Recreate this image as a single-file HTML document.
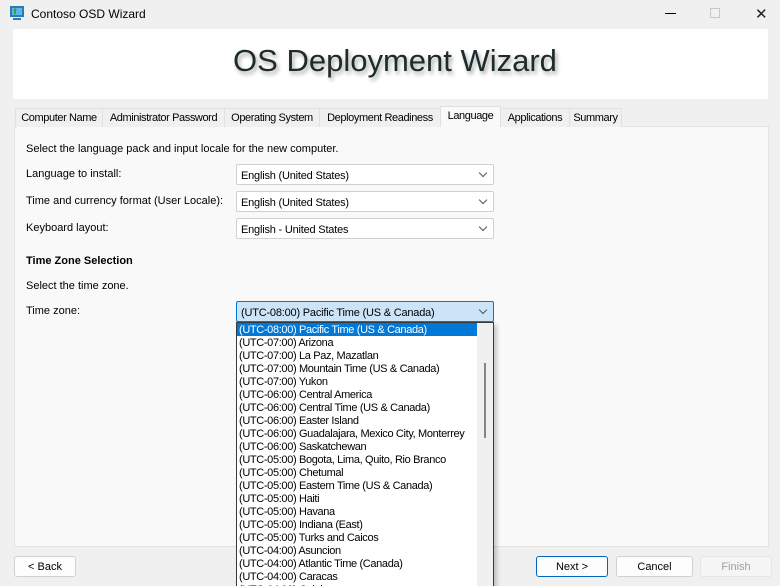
<!DOCTYPE html>
<html><head><style>
*{margin:0;padding:0;box-sizing:border-box}
html{width:780px;height:586px;overflow:hidden}
body{width:780px;height:586px;background:#f0f0f0;font-family:"Liberation Sans",sans-serif;font-size:11px;color:#000;position:relative;overflow:hidden}
.a{position:absolute;white-space:nowrap}
.hdr{left:13px;top:29px;width:755px;height:70px;background:#fff}
.title{left:0;width:790px;top:43px;text-align:center;font-size:31px;color:#1e2b2b;text-shadow:2px 3px 4px rgba(0,0,0,.35)}
.panel{left:14px;top:126px;width:755px;height:421px;background:#f9f9f9;border:1px solid #e3e3e3}
.tab{top:108px;height:19px;border:1px solid #e0e0e0;border-bottom:none;background:#f0f0f0;padding-top:3px;text-align:center;font-size:11px;letter-spacing:-0.4px;overflow:hidden}
.tab.sel{top:106px;height:21px;background:#f9f9f9;padding-top:3px}
.cb{left:236px;width:258px;height:21px;background:#fff;border:1px solid #d0d0d0;border-radius:2px;padding:5px 0 0 4px;letter-spacing:-0.2px}
.cb:after{content:"";position:absolute;right:7px;top:5px;width:5px;height:5px;border-right:1px solid #555;border-bottom:1px solid #555;transform:rotate(45deg)}
.btn{top:556px;height:21px;border:1px solid #d0d0d0;background:#fdfdfd;border-radius:3px;text-align:center;padding-top:4px;font-size:11px}
.list{left:236px;top:322px;width:258px;height:270px;background:#fff;border:1px solid #3a3a3a;box-shadow:3px 3px 4px rgba(0,0,0,.2)}
.list div{height:13px;line-height:14px;padding-left:2px;font-size:11px;letter-spacing:-0.35px;white-space:nowrap}
.list .s{background:#0078d7;color:#fff;width:240px}
</style></head><body>
<svg class="a" style="left:8px;top:5px" width="18" height="16" viewBox="0 0 18 16"><rect x="2" y="1" width="14" height="11" fill="#2a7ab8"/><rect x="4" y="3" width="10" height="7" fill="#5fb4e8"/><path d="M6 9 L6 5 L4 6 L7 3 L10 6 L8 5 L8 9Z" fill="#2fa53c"/><rect x="5" y="13" width="8" height="2" fill="#2a7ab8"/></svg>
<div class="a" style="left:31px;top:7px;font-size:12px">Contoso OSD Wizard</div>
<div class="a" style="left:665px;top:13px;width:11px;height:1px;background:#000"></div>
<div class="a" style="left:710px;top:8px;width:10px;height:10px;border:1px solid #c8c8c8"></div>
<div class="a" style="left:755px;top:5px;font-size:15px;color:#222">✕</div>
<div class="a hdr"></div>
<div class="a title">OS Deployment Wizard</div>
<div class="a panel"></div>
<div class="a tab" style="left:15px;width:88px">Computer Name</div>
<div class="a tab" style="left:102px;width:123px">Administrator Password</div>
<div class="a tab" style="left:224px;width:96px">Operating System</div>
<div class="a tab" style="left:319px;width:122px">Deployment Readiness</div>
<div class="a tab sel" style="left:440px;width:61px">Language</div>
<div class="a tab" style="left:500px;width:70px">Applications</div>
<div class="a tab" style="left:569px;width:53px">Summary</div>
<div class="a" style="left:26px;top:143px">Select the language pack and input locale for the new computer.</div>
<div class="a" style="left:26px;top:168px">Language to install:</div>
<div class="a" style="left:26px;top:195px">Time and currency format (User Locale):</div>
<div class="a" style="left:26px;top:222px">Keyboard layout:</div>
<div class="a cb" style="top:164px">English (United States)</div>
<div class="a cb" style="top:191px">English (United States)</div>
<div class="a cb" style="top:218px">English - United States</div>
<div class="a" style="left:26px;top:255px;font-weight:bold;font-size:11px">Time Zone Selection</div>
<div class="a" style="left:26px;top:280px">Select the time zone.</div>
<div class="a" style="left:26px;top:305px">Time zone:</div>
<div class="a cb" style="top:301px;background:#cce4f7;border-color:#0078d7">(UTC-08:00) Pacific Time (US &amp; Canada)</div>
<div class="a btn" style="left:14px;width:62px">&lt; Back</div>
<div class="a btn" style="left:536px;width:72px;border-color:#0067c0">Next &gt;</div>
<div class="a btn" style="left:616px;width:77px">Cancel</div>
<div class="a btn" style="left:700px;width:72px;color:#a0a0a0;border-color:#e5e5e5;background:#f5f5f5">Finish</div>
<div class="a list">
<div class="s">(UTC-08:00) Pacific Time (US &amp; Canada)</div>
<div>(UTC-07:00) Arizona</div>
<div>(UTC-07:00) La Paz, Mazatlan</div>
<div>(UTC-07:00) Mountain Time (US &amp; Canada)</div>
<div>(UTC-07:00) Yukon</div>
<div>(UTC-06:00) Central America</div>
<div>(UTC-06:00) Central Time (US &amp; Canada)</div>
<div>(UTC-06:00) Easter Island</div>
<div>(UTC-06:00) Guadalajara, Mexico City, Monterrey</div>
<div>(UTC-06:00) Saskatchewan</div>
<div>(UTC-05:00) Bogota, Lima, Quito, Rio Branco</div>
<div>(UTC-05:00) Chetumal</div>
<div>(UTC-05:00) Eastern Time (US &amp; Canada)</div>
<div>(UTC-05:00) Haiti</div>
<div>(UTC-05:00) Havana</div>
<div>(UTC-05:00) Indiana (East)</div>
<div>(UTC-05:00) Turks and Caicos</div>
<div>(UTC-04:00) Asuncion</div>
<div>(UTC-04:00) Atlantic Time (Canada)</div>
<div>(UTC-04:00) Caracas</div>
<div>(UTC-04:00) Cuiaba</div>
</div>
<div class="a" style="left:477px;top:323px;width:16px;height:270px;background:#f0f0f0"></div>
<div class="a" style="left:484px;top:363px;width:2px;height:75px;background:#858585"></div>
</body></html>
